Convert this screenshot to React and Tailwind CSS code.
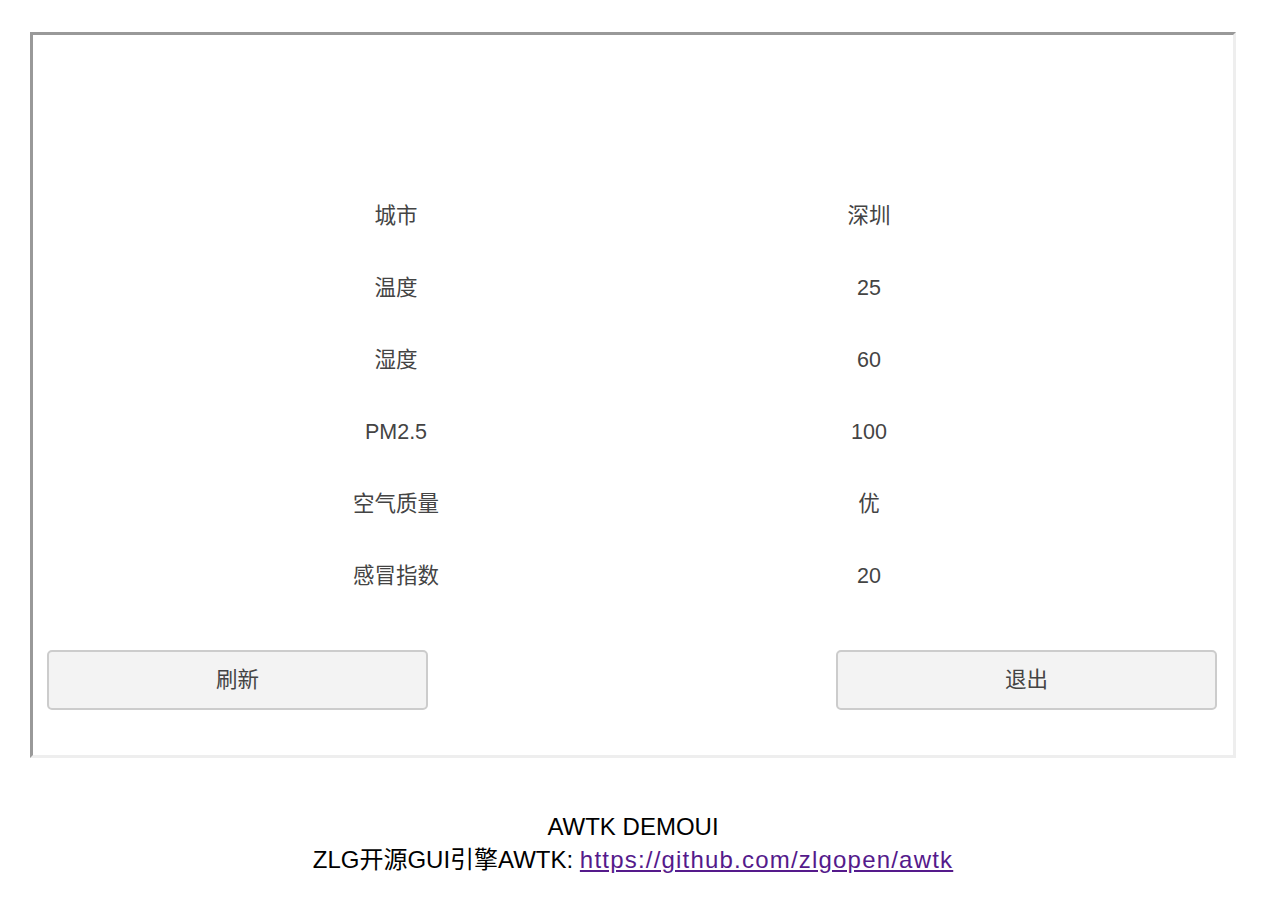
import React from 'react';

const rows = [
  { label: '城市', value: '深圳' },
  { label: '温度', value: '25' },
  { label: '湿度', value: '60' },
  { label: 'PM2.5', value: '100' },
  { label: '空气质量', value: '优' },
  { label: '感冒指数', value: '20' },
];

const font = { fontFamily: '"Liberation Sans", "Noto Sans CJK SC", sans-serif' };

const App = () => {
  return (
    <div className="bg-white min-h-[914px] pt-[32px]" style={font}>
      <div className="ml-[30px] w-[1206px] h-[726px] border-[3px] border-t-[#999999] border-l-[#999999] border-r-[#eeeeee] border-b-[#eeeeee] flex flex-col">
        {/* weather rows */}
        <div className="pt-[145px] flex flex-col">
          {rows.map((row) => (
            <div key={row.label} className="h-[72px] flex items-center text-[21.5px] text-[#444444]">
              <div className="ml-[243px] w-[240px] text-center">{row.label}</div>
              <div className="ml-[233px] w-[240px] text-center">{row.value}</div>
            </div>
          ))}
        </div>

        {/* buttons */}
        <div className="mt-[38px] flex">
          <button className="ml-[14px] w-[381px] h-[60px] rounded-[5px] border-2 border-[#cccccc] bg-[#f3f3f3] text-[21.5px] text-[#444444]">
            刷新
          </button>
          <button className="ml-[408px] w-[381px] h-[60px] rounded-[5px] border-2 border-[#cccccc] bg-[#f3f3f3] text-[21.5px] text-[#444444]">
            退出
          </button>
        </div>
      </div>

      {/* footer */}
      <div className="mt-[51px] text-center text-[24px] leading-[33px] text-black">
        <div className="pt-[1px]">AWTK DEMOUI</div>
        <div>
          ZLG开源GUI引擎AWTK:{' '}
          <a href="#" className="text-[#551a8b] underline tracking-[1.2px]">
            https://github.com/zlgopen/awtk
          </a>
        </div>
      </div>
    </div>
  );
};

export default App;
